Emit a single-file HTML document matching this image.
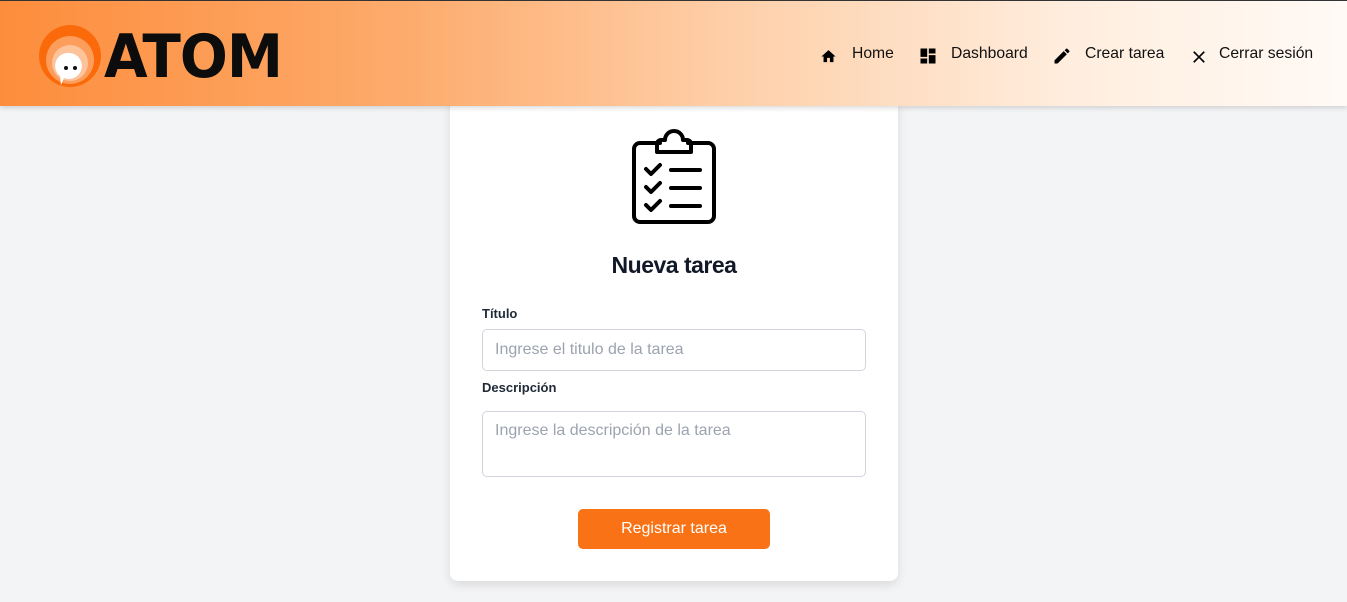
<!DOCTYPE html>
<html><head><meta charset="utf-8"><style>
*{box-sizing:border-box;margin:0;padding:0}
body{width:1347px;height:602px;overflow:hidden;background:#f3f4f6;font-family:"Liberation Sans",sans-serif;position:relative}
.hdr{position:absolute;left:0;top:0;width:1347px;height:106px;background:linear-gradient(90deg,#fd8d3c 0%,#fdab6c 30%,#fed0aa 55%,#ffeedf 80%,#fffaf6 100%);border-top:1px solid #333;box-shadow:0 2px 5px rgba(0,0,0,.15);z-index:2}
.nav{position:absolute;top:44px;font-size:15.7px;color:#111}
.card{position:absolute;left:450px;top:96px;width:448px;height:485px;background:#fff;border-radius:8px;box-shadow:0 4px 10px rgba(0,0,0,.1)}
.lbl{position:absolute;left:32px;font-size:13px;font-weight:bold;color:#1f2937}
.inp{position:absolute;left:32px;width:384px;border:1px solid #d1d5db;border-radius:5px;font-size:16px;color:#9ca3af;padding-left:12px}
</style></head><body>
<div class="hdr">
<svg style="position:absolute;left:39px;top:24px" width="64" height="64" viewBox="0 0 64 64">
<circle cx="31" cy="31" r="31" fill="#fb6a0a"/>
<circle cx="31" cy="35" r="24" fill="#fd9d5c"/>
<circle cx="31" cy="38" r="18" fill="#fdc39b"/>
<path d="M31 28a13 13 0 1 1 -6 25l-3 7 -1 -9a13 13 0 0 1 10 -23z" fill="#fff"/>
<circle cx="27" cy="43" r="2" fill="#111"/><circle cx="36" cy="43" r="2" fill="#111"/>
</svg>
<div style="position:absolute;left:104px;top:21px;font-size:60px;font-weight:900;letter-spacing:-1px;color:#0c0c0c;font-family:'DejaVu Sans','Liberation Sans',sans-serif;transform:scaleX(0.94);transform-origin:left">ATOM</div>
<svg style="position:absolute;left:820px;top:47px" width="17" height="17" viewBox="0 0 24 24"><path d="M10 20v-6h4v6h5v-8h3L12 3 2 12h3v8z"/></svg>
<div class="nav" style="left:852px">Home</div>
<svg style="position:absolute;left:918px;top:45px" width="20" height="20" viewBox="0 0 24 24"><path d="M3 13h8V3H3zm0 8h8v-6H3zm10 0h8V11h-8zm0-18v6h8V3z"/></svg>
<div class="nav" style="left:951px">Dashboard</div>
<svg style="position:absolute;left:1052px;top:45px" width="20" height="20" viewBox="0 0 24 24"><path d="M3 17.25V21h3.75L17.81 9.94l-3.75-3.75zM20.71 7.04a1 1 0 0 0 0-1.41l-2.34-2.34a1 1 0 0 0-1.41 0l-1.83 1.83 3.75 3.75z"/></svg>
<div class="nav" style="left:1085px">Crear tarea</div>
<svg style="position:absolute;left:1189px;top:46px" width="20" height="20" viewBox="0 0 24 24"><path d="M19 6.41 17.59 5 12 10.59 6.41 5 5 6.41 10.59 12 5 17.59 6.41 19 12 13.41 17.59 19 19 17.59 13.41 12z"/></svg>
<div class="nav" style="left:1219px">Cerrar sesión</div>
</div>
<div class="card">
<svg style="position:absolute;left:182px;top:32px" width="84" height="98" viewBox="0 0 84 98" fill="none" stroke="#000" stroke-width="4" stroke-linecap="round" stroke-linejoin="round">
<path d="M28 15H8a6 6 0 0 0-6 6v67a6 6 0 0 0 6 6h68a6 6 0 0 0 6-6V21a6 6 0 0 0-6-6H56"/>
<path d="M25 24V16a4 4 0 0 1 4-4h4a9 9 0 0 1 18 0h4a4 4 0 0 1 4 4v8z"/>
<path d="M14 41l5 5 9-9M14 59l5 5 9-9M14 77l5 5 9-9M39 42h29M39 60h29M39 78h29"/>
</svg>
<div style="position:absolute;left:0;width:448px;top:156px;text-align:center;font-size:23px;font-weight:bold;color:#111827;letter-spacing:-.5px">Nueva tarea</div>
<div class="lbl" style="top:210px">Título</div>
<div class="inp" style="top:233px;height:42px;line-height:40px">Ingrese el titulo de la tarea</div>
<div class="lbl" style="top:284px">Descripción</div>
<div class="inp" style="top:315px;height:66px;padding-top:10px">Ingrese la descripción de la tarea</div>
<div style="position:absolute;left:128px;top:413px;width:192px;height:40px;background:#f97316;border-radius:5px;color:#fff;font-size:16px;text-align:center;line-height:39px">Registrar tarea</div>
</div>
</body></html>
